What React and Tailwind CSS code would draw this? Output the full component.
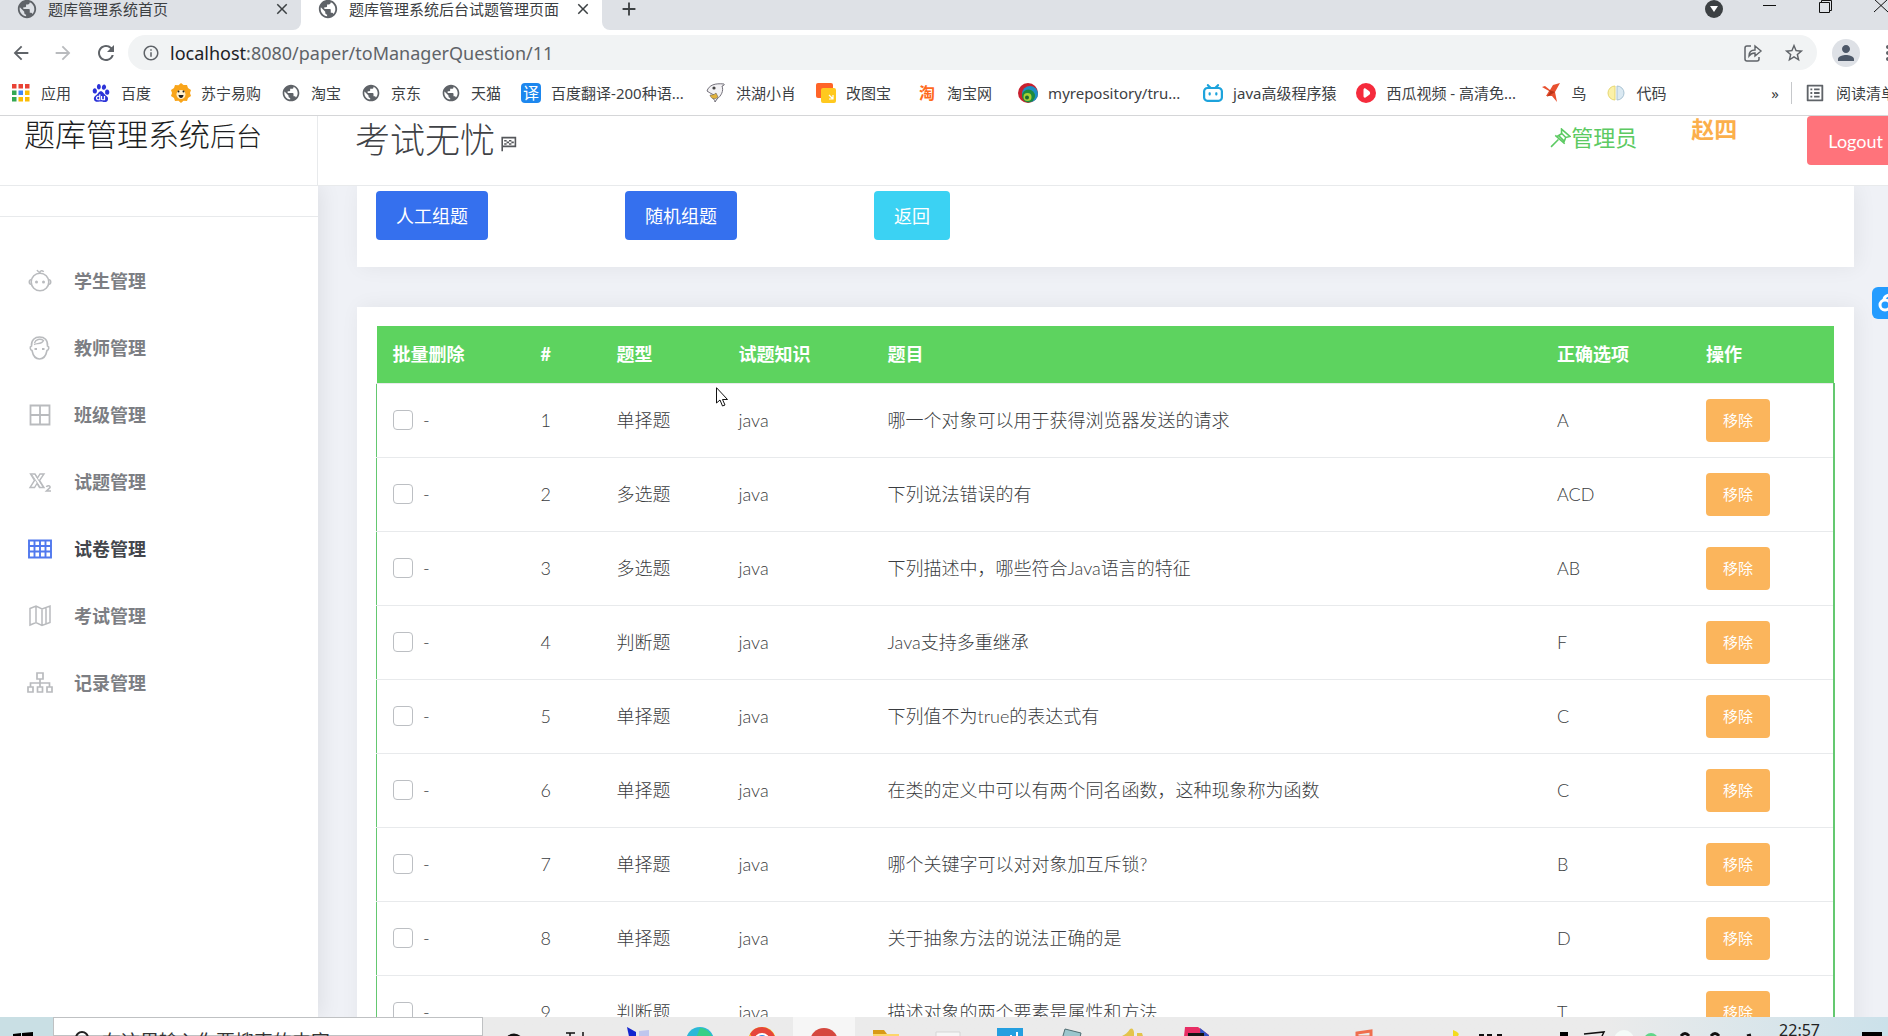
import {
  MdPublic,
  MdArrowBack,
  MdArrowForward,
  MdRefresh,
  MdInfoOutline,
  MdStarBorder,
  MdPerson,
  MdMoreVert,
  MdClose,
  MdAdd,
  MdOutlineListAlt,
} from 'react-icons/md';
import { SiBaidu, SiBilibili } from 'react-icons/si';

const questions = [
  { id: 1, type: '单择题', topic: 'java', title: '哪一个对象可以用于获得浏览器发送的请求', answer: 'A' },
  { id: 2, type: '多选题', topic: 'java', title: '下列说法错误的有', answer: 'ACD' },
  { id: 3, type: '多选题', topic: 'java', title: '下列描述中，哪些符合Java语言的特征', answer: 'AB' },
  { id: 4, type: '判断题', topic: 'java', title: 'Java支持多重继承', answer: 'F' },
  { id: 5, type: '单择题', topic: 'java', title: '下列值不为true的表达式有', answer: 'C' },
  { id: 6, type: '单择题', topic: 'java', title: '在类的定义中可以有两个同名函数，这种现象称为函数', answer: 'C' },
  { id: 7, type: '单择题', topic: 'java', title: '哪个关键字可以对对象加互斥锁?', answer: 'B' },
  { id: 8, type: '单择题', topic: 'java', title: '关于抽象方法的说法正确的是', answer: 'D' },
  { id: 9, type: '判断题', topic: 'java', title: '描述对象的两个要素是属性和方法', answer: 'T' },
];

function Svg({ children, className = 'size-5', viewBox = '0 0 20 20' }) {
  return (
    <svg viewBox={viewBox} className={className} fill="none" aria-hidden="true">
      {children}
    </svg>
  );
}

const globe = <MdPublic className="size-[22px] text-[#5f6368]" />;

const bookmarks = [
  {
    label: '应用',
    icon: (
      <Svg>
        {['#e94235', '#e94235', '#e94235', '#34a853', '#4285f4', '#fbbc04', '#34a853', '#fbbc04', '#fbbc04'].map((c, i) => (
          <rect key={i} x={1 + (i % 3) * 6.5} y={1 + Math.floor(i / 3) * 6.5} width="4.5" height="4.5" fill={c} />
        ))}
      </Svg>
    ),
  },
  { label: '百度', icon: <SiBaidu className="size-[18px] text-[#2b32d8]" /> },
  {
    label: '苏宁易购',
    icon: (
      <Svg>
        <path d="M10 0l2.500 2L16 2l1 3 3 2-1 3 1 3-3 2-1 3-3.500-.2L10 20l-2.500-2.200L4 18l-1-3-3-2 1-3-1-3 3-2 1-3 3.500.2z" fill="#f9a51a" />
        <circle cx="10" cy="11.500" r="4.500" fill="#fff0cc" />
        <circle cx="7.500" cy="8.500" r="1" fill="#222" />
        <circle cx="12.500" cy="8.500" r="1" fill="#222" />
        <path d="M7.500 12h5q-.5 3-2.500 3t-2.500-3z" fill="#222" />
      </Svg>
    ),
  },
  { label: '淘宝', icon: globe },
  { label: '京东', icon: globe },
  { label: '天猫', icon: globe },
  {
    label: '百度翻译-200种语...',
    width: 'w-[135px]',
    icon: <span className="flex size-5 items-center justify-center rounded-sm bg-[#1d87ee] text-base leading-none text-white">译</span>,
  },
  {
    label: '洪湖小肖',
    icon: (
      <Svg>
        <path d="M1 8C3 2 9 0 18 1c1 1-1 2-2 2 2 5-1 10-5 13l-2 3c0-2-1-3-2-3l1-4c-2-1-4-2-7-4z" fill="#f3f2f4" stroke="#716e78" strokeWidth="1" />
        <path d="M4 12c1 4 5 5 8 2l-2-4c-2 2-4 2-6 2z" fill="#e2b33c" stroke="#6b6355" strokeWidth=".6" />
        <circle cx="8" cy="5" r="1.600" fill="#444" />
      </Svg>
    ),
  },
  {
    label: '改图宝',
    width: 'w-[51px]',
    icon: (
      <Svg>
        <rect width="17" height="15" rx="2" fill="#ff6428" />
        <rect x="5" y="5" width="15" height="15" rx="2" fill="#ffc91f" />
        <path d="M13 12l4 4m0-4v4h-4" stroke="#fff" strokeWidth="1.200" />
      </Svg>
    ),
  },
  {
    label: '淘宝网',
    width: 'w-[51px]',
    icon: <span className="w-5 text-center text-base leading-5 font-bold text-[#ff6a1c]">淘</span>,
  },
  {
    label: 'myrepository/tru...',
    width: 'w-[135px]',
    icon: (
      <Svg>
        <circle cx="10" cy="10" r="10" fill="#c8202e" />
        <circle cx="12" cy="11" r="8" fill="#1c8fc4" />
        <circle cx="10.500" cy="13" r="6.500" fill="#1d8a3e" />
        <circle cx="9.500" cy="14" r="4" fill="#a9cf35" />
        <circle cx="9" cy="14.500" r="2" fill="#1b6a32" />
      </Svg>
    ),
  },
  { label: 'java高级程序猿', icon: <SiBilibili className="size-5 text-[#1da3dc]" /> },
  {
    label: '西瓜视频 - 高清免...',
    width: 'w-[135px]',
    icon: (
      <Svg>
        <circle cx="10" cy="10" r="10" fill="#f52b3c" />
        <path d="M7.500 7c0-1.500 1-2 2-1.500l3.500 2.500c1.500 1.500 1.500 3 0 4l-3.500 2.500c-1 .5-2 0-2-1.500z" fill="#fff" />
      </Svg>
    ),
  },
  {
    label: '鸟',
    icon: (
      <Svg>
        <path d="M1 4l3-1 5 4 3-5 7-2-5 9 2 10-5-6-6 0 3-5z" fill="#e8502f" />
        <path d="M8 7l6 2-8 5 3-5z" fill="#b93519" />
      </Svg>
    ),
  },
  {
    label: '代码',
    icon: (
      <Svg>
        <path d="M9 3a7 7 0 0 0 0 14z" fill="#fbf1a8" stroke="#e6d772" />
        <path d="M11 3a7 7 0 0 1 0 14z" fill="#dbe9f2" stroke="#a9c3d3" />
      </Svg>
    ),
  },
];

const menu = [
  {
    label: '学生管理',
    icon: (
      <>
        <circle cx="13" cy="14" r="8.800" strokeWidth="1.600" />
        <path d="M4.500 11.500c-3 .5-3 4.500 0 5M21.500 11.500c3 .5 3 4.500 0 5M10 2c1 2 2 2.500 3.500 3M13 4.500c0-2 3-2.500 3.500-.5" strokeWidth="1.500" />
        <circle cx="9.500" cy="14" r="1.500" stroke="none" fill="currentColor" />
        <circle cx="16.500" cy="14" r="1.500" stroke="none" fill="currentColor" />
      </>
    ),
  },
  {
    label: '教师管理',
    icon: (
      <>
        <path d="M4.500 11C4 5 8 2 12.500 2c5 0 8.500 3 8 9 2 .5 1.500 4-.5 4.500-1 5-3.500 8.500-7.500 8.500s-6.500-3.500-7.500-8.500C3 15 2.500 11.500 4.500 11z" strokeWidth="1.600" />
        <path d="M7 9.500c3-1.500 8 0 9.500-4C13 3 8.500 4.500 7.500 8" strokeWidth="1.400" />
        <path d="M7.500 14h2.500m5 0h2.500" strokeWidth="2" />
      </>
    ),
  },
  { label: '班级管理', icon: <path d="M3.500 3.500h19v19h-19zM13 3.500v19M3.500 13h19" strokeWidth="1.800" /> },
  {
    label: '试题管理',
    icon: (
      <>
        <path d="M3.500 5h4.500l2.500 4L13 5h4l-4.500 6.500L17 18.500h-4.500L10 14.500l-2.500 4H3l4.500-7z" strokeWidth="1.400" />
        <path d="M5 6l8 12M8 5.500l8 12.500" strokeWidth="1" />
        <path d="M19.500 18c.5-2 4-1.500 3.500.5L19.500 22H24" strokeWidth="1.600" />
      </>
    ),
  },
  {
    label: '试卷管理',
    active: true,
    icon: <path d="M2 4.500h22v17H2zM7.500 4.500v17M13 4.500v17M18.500 4.500v17M2 10h22M2 15.500h22" strokeWidth="1.900" />,
  },
  { label: '考试管理', icon: <path d="M3 5.500l6-2.500 6 3 8-3v16.500l-8 3-6-3-6 2.500zM9 3v16.500M15 6v16.500M19 4.500v16.500" strokeWidth="1.500" /> },
  {
    label: '记录管理',
    icon: <path d="M10 3h6v6h-6zM1 17h5v5H1zM10.500 17h5v5h-5zM20 17h5v5h-5zM13 9v8M3.500 17v-4h19v4" strokeWidth="1.700" />,
  },
];

function BrowserTab({ title, className }) {
  return (
    <div className={`flex w-[301px] shrink-0 items-center pb-3 ${className}`}>
      <MdPublic className="ml-4 size-[22px] shrink-0 text-[#5f6368]" />
      <span className="ml-2.5 flex-1 truncate text-[15px] leading-[18px] text-[#3c4043]">{title}</span>
      <button type="button" aria-label="关闭标签页" className="mr-2.5">
        <MdClose className="size-[18px] text-[#3c4043]" />
      </button>
    </div>
  );
}

function BrowserChrome() {
  return (
    <header className="shrink-0 border-b border-[#d5d6d8] bg-white">
      <div className="flex h-[30px] overflow-hidden">
        <BrowserTab title="题库管理系统首页" className="rounded-br-lg bg-[#dee1e6]" />
        <BrowserTab title="题库管理系统后台试题管理页面" className="bg-white" />
        <div className="flex flex-1 items-center justify-between rounded-bl-lg bg-[#dee1e6] pb-3 pl-4">
          <button type="button" aria-label="新建标签页">
            <MdAdd className="size-[22px] text-[#3c4043]" />
          </button>
          <div className="-mr-1 flex items-center gap-9">
            <Svg className="size-5">
              <circle cx="10" cy="10" r="9" fill="#3c4043" />
              <path d="M6 7h8l-4 6z" fill="#fff" />
            </Svg>
            <button type="button" aria-label="最小化">
              <Svg className="size-5"><path d="M3 6.500h13" stroke="#111" /></Svg>
            </button>
            <button type="button" aria-label="还原">
              <Svg className="size-5"><path d="M3.500 3.500h10v10h-10zM5.500 3V1.500h10v10h-2" stroke="#111" /></Svg>
            </button>
            <button type="button" aria-label="关闭">
              <Svg className="size-5"><path d="M2 0l14 13M16 0L2 13" stroke="#111" /></Svg>
            </button>
          </div>
        </div>
      </div>

      <div className="flex items-center pt-[5px] pl-2.5">
        <div className="flex w-[118px] items-center gap-5 text-[#5f6368]">
          <button type="button" aria-label="后退"><MdArrowBack className="size-[22px]" /></button>
          <button type="button" aria-label="前进"><MdArrowForward className="size-[22px] text-[#b9bbbe]" /></button>
          <button type="button" aria-label="刷新"><MdRefresh className="size-6" /></button>
        </div>
        <div className="flex h-[35px] flex-1 items-center rounded-full bg-[#f1f3f4] pr-3 pl-3.5 text-[#5f6368]">
          <MdInfoOutline className="size-[18px]" />
          <p className="ml-2.5 flex-1 text-[18px] leading-6">
            <span className="text-[#202124]">localhost</span>:8080/paper/toManagerQuestion/11
          </p>
          <button type="button" aria-label="分享" className="mr-5">
            <Svg className="size-5">
              <path d="M8 3H4Q2 3 2 5v11q0 2 2 2h10q2 0 2-2v-2" stroke="currentColor" strokeWidth="1.500" />
              <path d="M6 13q0-6 6-6V3l6 5-6 5v-3q-4 0-6 3z" stroke="currentColor" strokeWidth="1.400" />
            </Svg>
          </button>
          <button type="button" aria-label="收藏"><MdStarBorder className="size-[22px]" /></button>
        </div>
        <span className="ml-[15px] flex size-7 items-center justify-center rounded-full bg-[#dee1e6]">
          <MdPerson className="size-6 text-[#4d5868]" />
        </span>
        <button type="button" aria-label="更多" className="-mr-3 ml-4"><MdMoreVert className="size-6 text-[#5f6368]" /></button>
      </div>

      <nav className="flex h-[45px] items-center overflow-hidden pl-[11px] text-[15px] leading-5 whitespace-nowrap text-[#3c4043]">
        {bookmarks.map((b) => (
          <a key={b.label} href="#" className="mr-5 flex shrink-0 items-center gap-2.5">
            <span className="flex w-5 justify-center">{b.icon}</span>
            <span className={b.width}>{b.label}</span>
          </a>
        ))}
        <span className="ml-auto">»</span>
        <a href="#" className="-mr-2 ml-3 flex shrink-0 items-center gap-2.5 border-l border-[#c6c8cb] pl-3">
          <MdOutlineListAlt className="size-[22px] text-[#5f6368]" />
          阅读清单
        </a>
      </nav>
    </header>
  );
}

function Topbar() {
  return (
    <div className="flex h-[70px] shrink-0 border-b border-[#e8eaec] bg-white">
      <div className="w-[318px] shrink-0 border-r border-[#e8eaec] pl-6">
        <h1 className="text-[31px] leading-9 font-light text-[#1c1e22]">
          题库管理系统<span className="text-[26px] leading-none">后台</span>
        </h1>
      </div>
      <div className="flex flex-1 items-start overflow-hidden">
        <h2 className="ml-[37px] text-[35px] leading-[46px] font-light text-[#404246]">考试无忧</h2>
        <Svg className="mt-5 ml-1.5 size-4">
          <path d="M1.500 1v18M1 2h17v11H1" stroke="#55575b" strokeWidth="2" />
          <path d="M4 5h3v2H4zM10 5h3v2h-3zM7 7h3v2H7zM13 7h3v2h-3zM4 9h3v2H4zM10 9h3v2h-3z" fill="#55575b" />
        </Svg>
        <div className="ml-auto flex items-center pt-1 text-[22px] leading-9 text-[#5cca62]">
          <Svg className="size-[21px]">
            <path d="M1 18l7-7M5 7l9 8M6 8.500l5-3M13 14l2-5M11 1l8 7-4 1-4-4zM8 7l5 5" stroke="currentColor" strokeWidth="1.500" />
          </Svg>
          管理员
        </div>
        <p className="ml-[54px] text-[23px] leading-[26px] font-bold text-[#fbaf4b]">赵四</p>
        <button type="button" className="-mr-4 ml-[70px] h-[49px] rounded bg-[#ff737b] px-[21px] text-lg text-white">Logout</button>
      </div>
    </div>
  );
}

function Sidebar() {
  return (
    <aside className="relative w-[318px] shrink-0 bg-white pt-[30px] shadow-[3px_0_20px_rgba(0,0,0,0.08)]">
      <hr className="border-[#e8eaec]" />
      <nav className="pt-[30px]">
        {menu.map((item) => (
          <a
            key={item.label}
            href="#"
            className={`flex h-[67px] items-center gap-[21px] pl-[27px] text-lg font-bold ${item.active ? 'text-[#43464c]' : 'text-[#7c7e83]'}`}
          >
            <svg
              viewBox="0 0 26 26"
              className={`size-[26px] ${item.active ? 'text-[#5078ee]' : 'text-[#b9bbbe]'}`}
              fill="none"
              stroke="currentColor"
              aria-hidden="true"
            >
              {item.icon}
            </svg>
            {item.label}
          </a>
        ))}
      </nav>
    </aside>
  );
}

function QuestionTable() {
  return (
    <table className="w-full table-fixed border-collapse text-left text-lg leading-6 text-[#3a3c40]">
      <colgroup>
        <col className="w-[148px]" />
        <col className="w-[76px]" />
        <col className="w-[122px]" />
        <col className="w-[149px]" />
        <col />
        <col className="w-[149px]" />
        <col className="w-[144px]" />
      </colgroup>
      <thead className="bg-[#5dd35f] text-white">
        <tr className="h-[57px]">
          {['批量删除', '#', '题型', '试题知识', '题目', '正确选项', '操作'].map((h) => (
            <th key={h} scope="col" className="px-4 font-bold">{h}</th>
          ))}
        </tr>
      </thead>
      <tbody className="border-r-2 border-l border-[#64c870] font-light">
        {questions.map((q) => (
          <tr key={q.id} className="h-[74px] border-y border-y-[#e8eaec]">
            <td className="px-4">
              <label className="flex items-center gap-2.5">
                <input type="checkbox" className="size-5 appearance-none rounded border border-[#bcbfc3] bg-white" />
                -
              </label>
            </td>
            <td className="px-4">{q.id}</td>
            <td className="px-4">{q.type}</td>
            <td className="px-4">{q.topic}</td>
            <td className="px-4">{q.title}</td>
            <td className="px-4">{q.answer}</td>
            <td className="px-4">
              <button type="button" className="block h-[43px] rounded bg-[#fbb55c] px-[17px] text-[15px] font-normal text-white">移除</button>
            </td>
          </tr>
        ))}
      </tbody>
    </table>
  );
}

function Main() {
  return (
    <main className="min-w-0 flex-1 bg-[#eff1f6] pr-[34px] pl-[39px]">
      <section className="bg-white px-[19px] pt-[5px] pb-[27px] shadow-[3px_0_20px_rgba(0,0,0,0.06)]">
        <div className="flex text-lg text-white">
          <div className="w-[249px]"><button type="button" className="h-[49px] rounded bg-[#3570ee] px-5">人工组题</button></div>
          <div className="w-[249px]"><button type="button" className="h-[49px] rounded bg-[#3570ee] px-5">随机组题</button></div>
          <div><button type="button" className="h-[49px] rounded bg-[#3bd2f3] px-5">返回</button></div>
        </div>
      </section>
      <section className="mt-10 bg-white px-[19px] pt-[19px] pb-5 shadow-[3px_0_20px_rgba(0,0,0,0.06)]">
        <QuestionTable />
      </section>
    </main>
  );
}

const taskbarApps = [
  { name: 'cortana', art: <circle cx="13" cy="16" r="8" stroke="#111" strokeWidth="3" /> },
  { name: 'task-view', art: <path d="M3 6h9M7 6v6M3 12h10M20 5v5M20 12v7" stroke="#111" strokeWidth="1.500" /> },
  { name: 'remote', art: <><path d="M2 0l9 5v14H6z" fill="#1425cf" /><path d="M14 4l10-1v16H14z" fill="#bfc6ee" /></> },
  { name: 'edge', art: <><circle cx="13" cy="14" r="14" fill="#2bb8d8" /><path d="M6 19c0-9 12-10 14-3l6-2C25 5 18 1 13 1z" fill="#38cf86" /></> },
  { name: 'chrome', art: <><circle cx="13" cy="14" r="14" fill="#f8c424" /><path d="M13 0a14 14 0 0 1 13 10H13L5 13 1 7a14 14 0 0 1 12-7z" fill="#e6443a" /><circle cx="13" cy="14" r="7" fill="#3b8be8" stroke="#fff" strokeWidth="2" /></> },
  { name: 'recorder', active: true, art: <circle cx="13" cy="15" r="14" fill="#d5483f" /> },
  { name: 'folder', art: <><path d="M0 3h11l3 4h-14z" fill="#d89a17" /><path d="M0 7h26v12H0z" fill="#fcd66b" /></> },
  { name: 'printer', art: <path d="M1 5h24v14H1z" fill="#f6f6f6" stroke="#d5d5d5" /> },
  { name: 'notes', art: <><path d="M0 1h26v18H0z" fill="#249fe0" /><path d="M20 5v14M14 8v9" stroke="#fff" strokeWidth="2" /></> },
  { name: 'editor', art: <path d="M6 2l16 4-3 13H1z" fill="#9cc6cd" stroke="#506d72" /> },
  { name: 'tools', art: <path d="M1 9q5-2 8-7 3-2 4 3v14H1zM16 6h5l4 13h-9z" fill="#e3c44b" /> },
  { name: 'idea', art: <><path d="M2 0h13l11 8v11H0z" fill="#e82d64" /><path d="M17 1l10 8v8l-9 2z" fill="#3455c5" /><path d="M5 6h16v13H5z" fill="#151515" /><path d="M8 10h3m-1 0v9" stroke="#fff" /></> },
];

function Taskbar() {
  return (
    <footer className="flex h-[19px] shrink-0 overflow-hidden bg-gradient-to-r from-[#ebebeb] from-85% to-[#cbe1ea]">
      <button type="button" aria-label="开始" className="w-[53px] shrink-0 bg-[#c9dfe4]">
        <Svg className="ml-3 h-[19px] w-6" viewBox="0 0 24 19"><path d="M1 17l8-1v3H1zM10 16l11-1v4H10z" fill="#000" /></Svg>
      </button>
      <label className="flex w-[430px] shrink-0 items-start border border-[#bfc1c3] bg-white pl-5">
        <Svg className="mt-3 size-5 shrink-0"><circle cx="8" cy="8" r="6" stroke="#222" strokeWidth="2" /></Svg>
        <span className="sr-only">搜索</span>
        <input className="mt-3 ml-2 w-full text-[19px] leading-6 outline-none placeholder:text-[#333]" placeholder="在这里输入你要搜索的内容" />
      </label>
      <div className="flex shrink-0">
        {taskbarApps.map((app) => (
          <button key={app.name} type="button" aria-label={app.name} className={`w-[62px] ${app.active ? 'bg-[#f6f6f6]' : ''}`}>
            <svg viewBox="0 0 26 19" className="mx-auto mt-2.5 h-[19px] w-[26px]" fill="none">{app.art}</svg>
          </button>
        ))}
      </div>
      <svg viewBox="0 0 400 19" className="ml-auto h-[19px] w-[400px] shrink-0" fill="none" aria-hidden="true">
        <path d="M2 16l14-2v6H2z" stroke="#ef6e4e" strokeWidth="3" />
        <path d="M98 13q8 3 5 6h-5z" fill="#f3dc1c" />
        <path d="M124 18h5m3 0h5m5 0h5" stroke="#111" strokeWidth="2" />
        <path d="M205 15h8v4h-8z" fill="#000" />
        <path d="M229 17l20-2-2 4" stroke="#111" strokeWidth="1.500" />
        <circle cx="269" cy="23" r="10" fill="#f5fbf8" />
        <circle cx="296" cy="23" r="7" fill="#62d689" />
        <path d="M326 19q4-5 8 0m22 0q4-5 8 0m28 0l4-1" stroke="#111" strokeWidth="3" />
      </svg>
      <time className="ml-6 pt-1 text-base leading-[18px] text-[#222]">22:57</time>
      <Svg className="mt-[15px] mr-1.5 ml-[42px] h-1 w-5 shrink-0" viewBox="0 0 20 4"><path d="M0 0h20v4H0z" fill="#000" /></Svg>
    </footer>
  );
}

export default function App() {
  return (
    <div className="relative flex h-screen flex-col overflow-hidden bg-white font-['Noto_Sans','Noto_Sans_CJK_SC',sans-serif]">
      <BrowserChrome />
      <div className="flex min-h-0 flex-1 flex-col overflow-hidden font-['Lato','Noto_Sans_CJK_SC',sans-serif]">
        <Topbar />
        <div className="flex min-h-0 flex-1 overflow-hidden">
          <Sidebar />
          <Main />
        </div>
      </div>
      <Taskbar />

      {/* floating cloud-drive handle */}
      <button type="button" aria-label="网盘" className="absolute top-[287px] right-0 h-8 w-4 overflow-hidden rounded-l-md bg-[#249cff]">
        <svg viewBox="0 0 16 32" className="h-8 w-4" fill="none" stroke="#fff" strokeWidth="3" aria-hidden="true">
          <circle cx="13" cy="18" r="5" />
          <path d="M12 13q0-4 5-5" />
        </svg>
      </button>

      {/* mouse pointer */}
      <svg viewBox="0 0 13 20" className="absolute top-[387px] left-[716px] h-5 w-[13px]" aria-hidden="true">
        <path d="M.5.700v15.300l3.500-3 2.500 6 2.500-1-2.500-5.500h5z" fill="#fff" stroke="#111" />
      </svg>
    </div>
  );
}
